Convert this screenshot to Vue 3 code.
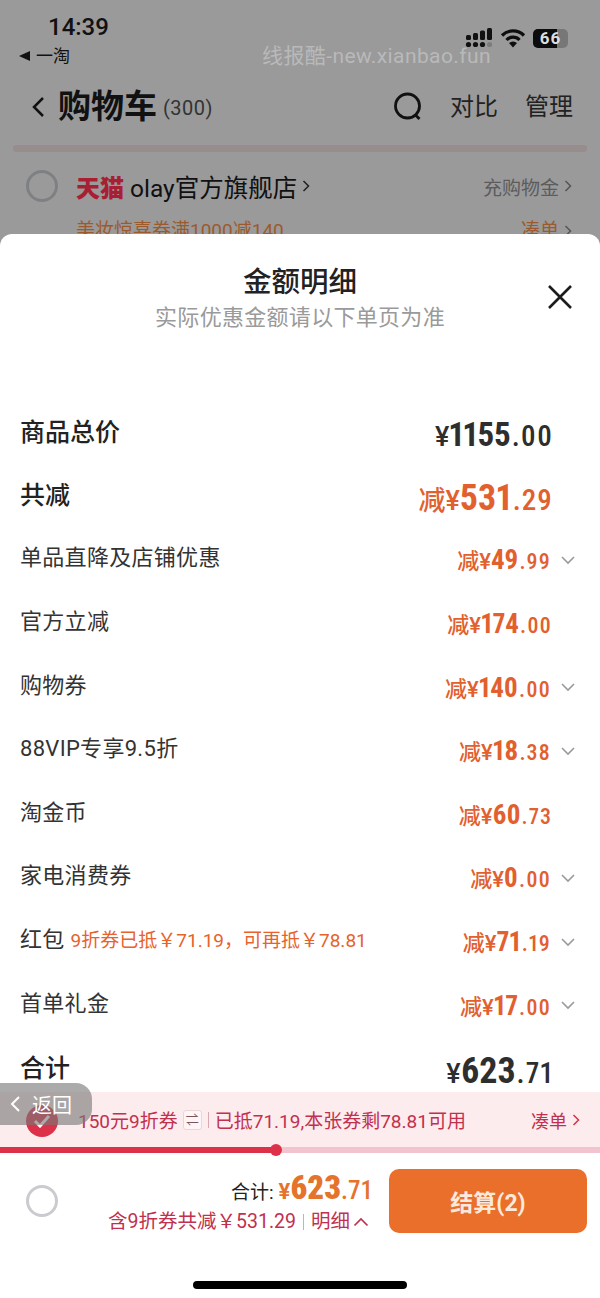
<template>
  <div class="page">
    <div class="backdrop">
      <div class="status">
        <div class="status-left">
          <div class="time">14:39</div>
          <div class="back-app"><span class="tri"></span>一淘</div>
        </div>
        <div class="watermark">线报酷-new.xianbao.fun</div>
        <div class="status-right">
          <svg width="28" height="20" viewBox="0 0 28 20">
            <g fill="#111">
              <rect x="1" y="7" width="5" height="5" rx="1.500" />
              <rect x="8" y="5" width="5" height="7" rx="1.500" />
              <rect x="15" y="2.500" width="5" height="9.500" rx="1.500" />
              <rect x="22" y="0" width="5" height="12" rx="1.500" />
              <circle cx="3.500" cy="16.500" r="2.600" />
              <circle cx="10.500" cy="16.500" r="2.600" />
              <circle cx="17.500" cy="16.500" r="2.600" />
              <circle cx="24.500" cy="16.500" r="2.600" fill="#7c7c7c" />
            </g>
          </svg>
          <svg width="26" height="20" viewBox="0 0 26 20" fill="none" stroke="#0e0e0e" stroke-width="3.200">
            <path d="M2 7.500a15.500 15.500 0 0 1 22 0" />
            <path d="M6.500 12a9 9 0 0 1 13 0" />
            <path d="M13 19.500l-4-4.500a6 6 0 0 1 8 0z" fill="#0e0e0e" stroke="none" />
          </svg>
          <div class="battery"><span class="battery-fill"></span><span class="battery-num">66</span></div>
        </div>
      </div>
      <div class="nav">
        <svg width="14" height="24" viewBox="0 0 14 24" fill="none" stroke="#111" stroke-width="2.500">
          <path d="M12 3L3 12l9 9" />
        </svg>
        <span class="nav-title">购物车</span>
        <span class="nav-count">(300)</span>
        <svg class="search" width="30" height="30" viewBox="0 0 30 30" fill="none" stroke="#111" stroke-width="2.800">
          <circle cx="14.500" cy="14" r="12" />
          <path d="M22.500 23l4 4" />
        </svg>
        <span class="nav-link">对比</span>
        <span class="nav-link">管理</span>
      </div>
      <div class="divider"></div>
      <div class="shop">
        <span class="radio dim"></span>
        <span class="tmall">天猫</span>
        <span class="shop-name">olay官方旗舰店</span>
        <svg width="9" height="14" viewBox="0 0 9 14" fill="none" stroke="#222" stroke-width="1.500"><path d="M1.500 2l5 5-5 5" /></svg>
        <span class="shop-right">充购物金</span>
        <svg width="9" height="14" viewBox="0 0 9 14" fill="none" stroke="#555" stroke-width="1.500"><path d="M1.500 2l5 5-5 5" /></svg>
      </div>
      <div class="promo">
        <span>美妆惊喜券满1000减140</span>
        <span class="promo-right">凑单</span>
        <svg width="9" height="14" viewBox="0 0 9 14" fill="none" stroke="#555" stroke-width="1.500"><path d="M1.500 2l5 5-5 5" /></svg>
      </div>
    </div>

    <div class="sheet">
      <div class="sheet-head">
        <h2>金额明细</h2>
        <p>实际优惠金额请以下单页为准</p>
        <svg class="close" width="28" height="28" viewBox="0 0 28 28" stroke="#1c1c1c" stroke-width="2.600">
          <path d="M3 3l22 22M25 3L3 25" />
        </svg>
      </div>

      <div class="rows">
        <div class="row main">
          <span class="label">商品总价</span>
          <span class="price dark big narrow"><i>¥</i><b>1155</b><em>.00</em></span>
        </div>
        <div class="row main">
          <span class="label">共减</span>
          <span class="price big"><i class="jian">减</i><i>¥</i><b>531</b><em>.29</em></span>
        </div>
        <div v-for="item in items" :key="item.label" class="row">
          <span class="label-sm">{{ item.label }}<small v-if="item.note">{{ item.note }}</small></span>
          <span class="price">
            <i class="jian">减</i><i>¥</i><b>{{ item.int }}</b><em>.{{ item.dec }}</em>
            <svg v-if="item.arrow" class="chev" width="16" height="10" viewBox="0 0 16 10" fill="none" stroke="#9a9a9a" stroke-width="1.600">
              <path d="M2 2l6 6 6-6" />
            </svg>
            <span v-else class="chev-gap"></span>
          </span>
        </div>
        <div class="row main">
          <span class="label">合计</span>
          <span class="price dark big"><i>¥</i><b>623</b><em>.71</em></span>
        </div>
      </div>

      <div class="coupon">
        <span class="check">
          <svg width="18" height="14" viewBox="0 0 18 14" fill="none" stroke="#fff" stroke-width="3"><path d="M2 7l5 5 9-10" /></svg>
        </span>
        <span>150元9折券</span>
        <span class="swap">⇌</span>
        <span class="sep"></span>
        <span>已抵71.19,本张券剩78.81可用</span>
        <span class="coupon-right">凑单</span>
        <svg width="9" height="14" viewBox="0 0 9 14" fill="none" stroke="#d4324f" stroke-width="1.500"><path d="M1.500 2l5 5-5 5" /></svg>
      </div>
      <div class="progress">
        <div class="progress-bar" :style="{ width: progress + 'px' }"><span class="knob"></span></div>
      </div>

      <div class="footer">
        <span class="radio"></span>
        <div class="sum">
          <div class="sum-top">
            <span class="sum-label">合计:</span>
            <span class="sum-price"><i>¥</i><b>623</b><em>.71</em></span>
          </div>
          <div class="sum-sub">
            <span>含9折券共减￥531.29</span>
            <span class="sep light"></span>
            <span>明细</span>
            <svg width="16" height="10" viewBox="0 0 16 10" fill="none" stroke="#c2304f" stroke-width="1.700"><path d="M1.500 8.500L8 2l6.500 6.500" /></svg>
          </div>
        </div>
        <button class="pay">结算(2)</button>
      </div>

      <div class="home-wrap"><span class="home"></span></div>
    </div>

    <div class="back-pill">
      <svg width="12" height="18" viewBox="0 0 12 18" fill="none" stroke="#fff" stroke-width="2"><path d="M10 2L3 9l7 7" /></svg>
      <span>返回</span>
    </div>
  </div>
</template>

<script setup>
const progress = 276;

const items = [
  { label: "单品直降及店铺优惠", int: "49", dec: "99", arrow: true },
  { label: "官方立减", int: "174", dec: "00", arrow: false },
  { label: "购物券", int: "140", dec: "00", arrow: true },
  { label: "88VIP专享9.5折", int: "18", dec: "38", arrow: true },
  { label: "淘金币", int: "60", dec: "73", arrow: false },
  { label: "家电消费券", int: "0", dec: "00", arrow: true },
  { label: "红包", note: "9折券已抵￥71.19，可再抵￥78.81", int: "71", dec: "19", arrow: true },
  { label: "首单礼金", int: "17", dec: "00", arrow: true },
];
</script>

<style>
body {
  margin: 0;
  background: #9a9a9b;
}
</style>

<style scoped>
.page {
  position: relative;
  width: 600px;
  height: 1298px;
  overflow: hidden;
  background: #9a9a9b;
  font-family: Roboto, "Noto Sans CJK SC", sans-serif;
  color: #1c1c1c;
}

i,
em {
  font-style: normal;
}

.backdrop {
  height: 234px;
  overflow: hidden;
  color: #111;
}

.status {
  display: flex;
  height: 72px;
  padding: 15px 32px 0 19px;
  box-sizing: border-box;
  position: relative;
}

.status-left {
  width: 240px;
}

.time {
  font-size: 24px;
  line-height: 24px;
  font-weight: 500;
  padding-left: 29px;
}

.back-app {
  display: flex;
  align-items: center;
  gap: 6px;
  font-size: 17px;
  line-height: 24px;
  margin-top: 5px;
}

.tri {
  border-right: 11px solid #111;
  border-top: 5px solid transparent;
  border-bottom: 5px solid transparent;
}

.watermark {
  position: absolute;
  left: 262px;
  top: 43px;
  font-size: 21px;
  line-height: 26px;
  letter-spacing: 0.4px;
  color: #b9b9b9;
  white-space: nowrap;
}

.status-right {
  margin-left: auto;
  display: flex;
  align-items: center;
  gap: 7px;
  height: 24px;
  margin-top: 11px;
}

.battery {
  position: relative;
  width: 35px;
  height: 19px;
  background: #777;
  border-radius: 5px;
  overflow: hidden;
}

.battery-fill {
  position: absolute;
  left: 0;
  top: 0;
  bottom: 0;
  width: 24px;
  background: #0c0c0c;
}

.battery-num {
  position: relative;
  display: block;
  text-align: center;
  font-size: 17px;
  line-height: 19px;
  font-weight: 700;
  letter-spacing: 1px;
  color: #ddd;
}

.nav {
  display: flex;
  align-items: center;
  height: 70px;
  padding: 0 27px 0 31px;
}

.nav-title {
  margin-left: 13px;
  font-size: 33px;
  font-weight: 700;
  line-height: 40px;
}

.nav-count {
  margin-left: 6px;
  margin-top: 2px;
  font-size: 20px;
  color: #333;
  letter-spacing: 0.5px;
}

.search {
  margin-left: auto;
}

.nav-link {
  margin-left: 27px;
  font-size: 24px;
  line-height: 32px;
  color: #222;
}

.divider {
  height: 7px;
  margin: 3px 13px 0;
  background: #978d8d;
  border-radius: 3px;
}

.shop {
  display: flex;
  align-items: center;
  height: 38px;
  margin-top: 15px;
  padding: 0 27px 0 26px;
  gap: 0;
}

.radio {
  width: 32px;
  height: 32px;
  box-sizing: border-box;
  border-radius: 50%;
  border: 3px solid #c9cbcf;
  flex: none;
}

.radio.dim {
  border-color: #7f8083;
}

.tmall {
  margin-left: 18px;
  font-size: 24px;
  font-weight: 900;
  color: #a81f34;
}

.shop-name {
  margin-left: 6px;
  margin-right: 5px;
  font-size: 24.500px;
  color: #111;
}

.shop-right {
  margin-left: auto;
  margin-right: 5px;
  font-size: 19px;
  color: #5c5c5c;
}

.promo {
  display: flex;
  align-items: center;
  margin-top: 14px;
  padding: 0 27px 0 76px;
  font-size: 19px;
  line-height: 24px;
  color: #9c5a2c;
}

.promo-right {
  margin-left: auto;
  margin-right: 5px;
}

.sheet {
  height: 1064px;
  background: #fff;
  border-radius: 12px 12px 0 0;
  display: flex;
  flex-direction: column;
}

.sheet-head {
  position: relative;
  height: 132px;
  padding-top: 30px;
  box-sizing: border-box;
  text-align: center;
}

.sheet-head h2 {
  margin: 0;
  font-size: 28.500px;
  line-height: 38px;
  font-weight: 500;
  color: #222;
}

.sheet-head p {
  margin: 0;
  font-size: 22px;
  line-height: 32px;
  letter-spacing: 0.3px;
  color: #9a9a9a;
}

.close {
  position: absolute;
  right: 26px;
  top: 49px;
}

.rows {
  padding: 32px 0 0 20px;
  display: flex;
  flex-direction: column;
  height: 726px;
  box-sizing: border-box;
}

.row {
  display: flex;
  align-items: center;
  justify-content: space-between;
  height: 63.6px;
  flex: none;
  padding-right: 24px;
}

.label {
  font-size: 25px;
  font-weight: 500;
  color: #222;
}

.label-sm {
  margin-bottom: 3px;
  font-size: 22px;
  letter-spacing: 0.3px;
  color: #333;
}

.label-sm small {
  margin-left: 6px;
  font-size: 19px;
  letter-spacing: 0;
  color: #e8622c;
}

.price {
  display: flex;
  align-items: baseline;
  margin-top: 6px;
  color: #e2602e;
  font-size: 22px;
  font-variant-numeric: proportional-nums;
}

.price i {
  font-weight: 500;
}

.price b {
  font-stretch: 85%;
  font-size: 27px;
  font-weight: 700;
}

.price em {
  margin-left: 1px;
  font-stretch: 80%;
  font-size: 22px;
  font-weight: 500;
  letter-spacing: 1px;
  margin-right: -1px;
}

.price.big {
  font-size: 27px;
  margin-right: 24px;
  margin-top: 10px;
}

.price.big b {
  font-size: 36px;
}

.price.big em {
  font-size: 29px;
}

.price.big.narrow b {
  font-size: 33px;
  font-stretch: 78%;
}

.price.dark {
  color: #2e2e2e;
}

.chev {
  margin-left: 10px;
  align-self: center;
}

.chev-gap {
  width: 25px;
}

.coupon {
  position: relative;
  display: flex;
  align-items: center;
  height: 55px;
  flex: none;
  padding: 0 19px 0 78px;
  background: #fcecee;
  font-size: 19px;
  color: #c2304f;
}

.check {
  position: absolute;
  left: 26px;
  top: 13px;
  width: 32px;
  height: 32px;
  border-radius: 50%;
  background: #dd3049;
  display: flex;
  align-items: center;
  justify-content: center;
}

.swap {
  margin-left: 5px;
  width: 17px;
  height: 18px;
  border: 1px solid #e8d6da;
  border-radius: 3px;
  background: #fff5f6;
  font-size: 13px;
  line-height: 18px;
  text-align: center;
  color: #7a5560;
}

.sep {
  width: 1px;
  height: 16px;
  margin: 0 6px 0 6px;
  background: #d8a9b4;
}

.sep.light {
  margin: 0 7px 0 7px;
}

.coupon-right {
  margin-left: auto;
  margin-right: 5px;
  font-size: 18px;
}

.progress {
  height: 6px;
  flex: none;
  background: #f2c4cf;
}

.progress-bar {
  position: relative;
  height: 100%;
  background: #dd3049;
}

.knob {
  position: absolute;
  right: -6px;
  top: -3px;
  width: 12px;
  height: 12px;
  border-radius: 50%;
  background: #dd3049;
}

.footer {
  display: flex;
  align-items: center;
  height: 96px;
  flex: none;
  padding: 0 13px 0 26px;
}

.sum {
  margin-left: auto;
  margin-right: 16px;
  display: flex;
  flex-direction: column;
  align-items: flex-end;
}

.sum-top {
  display: flex;
  align-items: baseline;
  gap: 5px;
  height: 38px;
}

.sum-label {
  font-size: 19px;
  color: #222;
}

.sum-price {
  display: flex;
  align-items: baseline;
  color: #e6732c;
  font-size: 22px;
  font-weight: 700;
}

.sum-price b {
  font-stretch: 78%;
  font-size: 33px;
}

.sum-price em {
  font-stretch: 75%;
  font-size: 25px;
  font-weight: 500;
}

.sum-sub {
  display: flex;
  align-items: center;
  margin-top: 4px;
  font-size: 19.500px;
  line-height: 24px;
  color: #c2304f;
}

.sum-sub svg {
  margin-left: 3px;
  margin-right: 4px;
}

.pay {
  width: 198px;
  height: 64px;
  border: none;
  border-radius: 10px;
  background: #ea6f2a;
  color: #fbe9dd;
  font-family: inherit;
  font-size: 23px;
  font-weight: 700;
}

.home-wrap {
  flex: 1;
  display: flex;
  justify-content: center;
}

.home {
  width: 214px;
  height: 8px;
  margin-top: 32px;
  border-radius: 4px;
  background: #000;
}

.back-pill {
  position: absolute;
  left: 0;
  top: 1083px;
  width: 92px;
  height: 42px;
  box-sizing: border-box;
  padding-left: 9px;
  display: flex;
  align-items: center;
  gap: 11px;
  border-radius: 0 16px 16px 0;
  background: rgba(120, 120, 120, 0.62);
  color: #fff;
  font-size: 20px;
}
</style>
